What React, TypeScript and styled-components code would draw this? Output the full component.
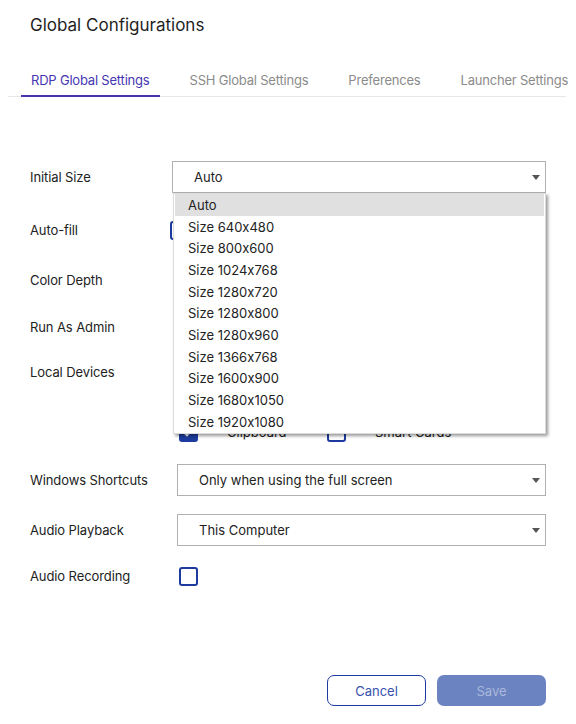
import React from "react";
import styled, { createGlobalStyle } from "styled-components";

const Global = createGlobalStyle`
  html, body { margin: 0; padding: 0; background: #fff; }
  body {
    font-family: "Inter", "Liberation Sans", sans-serif;
    color: #222;
    font-feature-settings: "calt" 0;
    overflow-x: hidden;
  }
  * { box-sizing: border-box; }
`;

const Page = styled.div`
  min-height: 724px;
  display: flex;
  flex-direction: column;
  padding: 0 10px 18px 8px;
`;

const Title = styled.h1`
  margin: 0;
  padding: 15px 0 0 22px;
  height: 52px;
  font-size: 17px;
  font-weight: 400;
  color: #1f1f1f;
`;

const TabBar = styled.div`
  display: flex;
  gap: 20px;
  margin-top: 12px;
  padding-left: 13px;
  border-bottom: 1px solid #e6e6e6;
  white-space: nowrap;
`;

const Tab = styled.div<{ $active?: boolean }>`
  padding: 8px 10px 7px;
  font-size: 13px;
  letter-spacing: -0.2px;
  color: ${(p) => (p.$active ? "#4636b2" : "#8b8b8b")};
  border-bottom: 2px solid ${(p) => (p.$active ? "#4636b2" : "transparent")};
  margin-bottom: -1px;
  flex: none;
`;

const Form = styled.div`
  display: flex;
  flex-direction: column;
  padding: 0 20px 0 22px;
`;

const Row = styled.div<{ $mt: number; $h?: number; $top?: boolean }>`
  display: grid;
  grid-template-columns: 142px 1fr;
  align-items: ${(p) => (p.$top ? "start" : "center")};
  margin-top: ${(p) => p.$mt}px;
  min-height: ${(p) => p.$h ?? 32}px;
`;

const Label = styled.div<{ $top?: boolean }>`
  font-size: 13px;
  color: #222;
  letter-spacing: -0.1px;
  line-height: ${(p) => (p.$top ? "32px" : "normal")};
`;

const SelectWrap = styled.div<{ $offset: number }>`
  position: relative;
  margin-left: ${(p) => p.$offset}px;
`;

const SelectBox = styled.div`
  height: 32px;
  border: 1px solid #b0b0b0;
  display: flex;
  align-items: center;
  justify-content: space-between;
  padding: 0 5px 0 21px;
  font-size: 13px;
  color: #222;
  background: #fff;
`;

const Caret = styled.span`
  width: 0;
  height: 0;
  border-left: 4px solid transparent;
  border-right: 4px solid transparent;
  border-top: 5px solid #555;
`;

const DropList = styled.ul`
  position: absolute;
  top: 100%;
  left: 1px;
  right: 0;
  margin: 0;
  padding: 0 1px;
  list-style: none;
  background: #fff;
  border: 1px solid #dcdcdc;
  box-shadow: 2px 2px 3px rgba(0, 0, 0, 0.4);
  z-index: 10;
`;

const DropItem = styled.li<{ $selected?: boolean }>`
  height: 21.7px;
  display: flex;
  align-items: center;
  padding-left: 13px;
  font-size: 13px;
  color: #222;
  background: ${(p) => (p.$selected ? "#e0e0e0" : "transparent")};
`;

const Box = styled.span<{ $checked?: boolean; $offset?: number }>`
  width: 19px;
  height: 19px;
  flex: none;
  margin-left: ${(p) => p.$offset ?? 0}px;
  border: 2px solid #1d3b9f;
  border-radius: 3px;
  background: ${(p) => (p.$checked ? "#1d3b9f" : "#fff")};
  display: flex;
  align-items: center;
  justify-content: center;
`;

const Devices = styled.div`
  display: flex;
  flex-direction: column;
  margin-left: 7px;
  padding-top: 1px;
`;

const DeviceRow = styled.div`
  display: grid;
  grid-template-columns: 148px 1fr;
  height: 30px;
  align-items: center;
`;

const Option = styled.label`
  display: flex;
  align-items: center;
  gap: 29px;
  font-size: 13px;
  color: #222;
`;

const Footer = styled.div`
  margin-top: auto;
  display: flex;
  justify-content: flex-end;
  gap: 11px;
  padding-right: 20px;
`;

const Button = styled.button<{ $primary?: boolean }>`
  height: 31px;
  width: ${(p) => (p.$primary ? 109 : 99)}px;
  border-radius: 7px;
  font-family: inherit;
  font-size: 13px;
  border: ${(p) => (p.$primary ? "none" : "1.5px solid #1d3b9f")};
  background: ${(p) => (p.$primary ? "#6b83c0" : "#fff")};
  color: ${(p) => (p.$primary ? "#a9b7dc" : "#3852ad")};
`;

const Check = () => (
  <svg width="11" height="9" viewBox="0 0 11 9">
    <path d="M1 4.5 L4 7.5 L10 1" fill="none" stroke="#fff" strokeWidth="1.8" />
  </svg>
);

const Select: React.FC<{ value: string; offset: number; children?: React.ReactNode }> = ({
  value,
  offset,
  children,
}) => (
  <SelectWrap $offset={offset}>
    <SelectBox>
      <span>{value}</span>
      <Caret />
    </SelectBox>
    {children}
  </SelectWrap>
);

const sizes = [
  "Auto",
  "Size 640x480",
  "Size 800x600",
  "Size 1024x768",
  "Size 1280x720",
  "Size 1280x800",
  "Size 1280x960",
  "Size 1366x768",
  "Size 1600x900",
  "Size 1680x1050",
  "Size 1920x1080",
];

const devices: [string, boolean, string, boolean][] = [
  ["Printers", true, "Drives", false],
  ["Ports", false, "PnP Devices", false],
  ["Clipboard", true, "Smart Cards", false],
];

export default function App() {
  return (
    <>
      <Global />
      <Page>
        <Title>Global Configurations</Title>
        <TabBar>
          <Tab $active>RDP Global Settings</Tab>
          <Tab>SSH Global Settings</Tab>
          <Tab>Preferences</Tab>
          <Tab>Launcher Settings</Tab>
        </TabBar>
        <Form>
          <Row $mt={64}>
            <Label>Initial Size</Label>
            <Select value="Auto" offset={0}>
              <DropList>
                {sizes.map((s, i) => (
                  <DropItem key={s} $selected={i === 0}>
                    {s}
                  </DropItem>
                ))}
              </DropList>
            </Select>
          </Row>
          <Row $mt={21}>
            <Label>Auto-fill</Label>
            <Box $offset={-2} />
          </Row>
          <Row $mt={18}>
            <Label>Color Depth</Label>
            <Select value="High Color (16 bit)" offset={5} />
          </Row>
          <Row $mt={15}>
            <Label>Run As Admin</Label>
            <Box $offset={7} />
          </Row>
          <Row $mt={13} $h={92} $top>
            <Label $top>Local Devices</Label>
            <Devices>
              {devices.map(([a, ac, b, bc]) => (
                <DeviceRow key={a}>
                  <Option>
                    <Box $checked={ac}>{ac && <Check />}</Box>
                    {a}
                  </Option>
                  <Option>
                    <Box $checked={bc}>{bc && <Check />}</Box>
                    {b}
                  </Option>
                </DeviceRow>
              ))}
            </Devices>
          </Row>
          <Row $mt={16}>
            <Label>Windows Shortcuts</Label>
            <Select value="Only when using the full screen" offset={5} />
          </Row>
          <Row $mt={18}>
            <Label>Audio Playback</Label>
            <Select value="This Computer" offset={5} />
          </Row>
          <Row $mt={14}>
            <Label>Audio Recording</Label>
            <Box $offset={7} />
          </Row>
        </Form>
        <Footer>
          <Button>Cancel</Button>
          <Button $primary>Save</Button>
        </Footer>
      </Page>
    </>
  );
}
